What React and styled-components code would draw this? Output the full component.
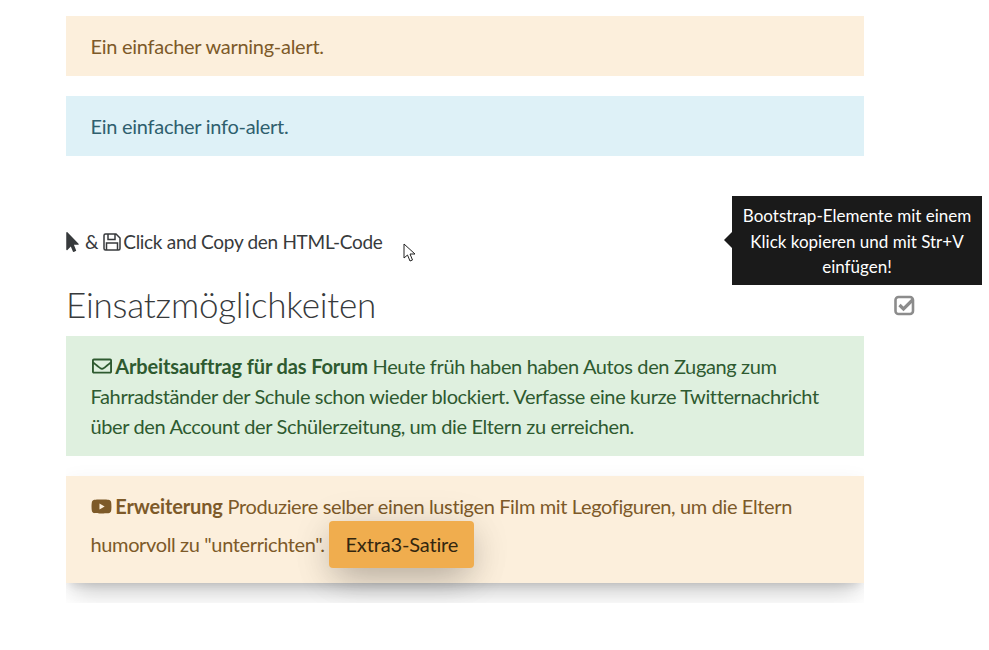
import React from "react";
import styled, { createGlobalStyle } from "styled-components";
import { FaMousePointer, FaRegEnvelope, FaYoutube } from "react-icons/fa";

const Global = createGlobalStyle`
  html, body {
    margin: 0;
    background: #fff;
    font-family: "Lato", "Open Sans", sans-serif;
    color: #373a3c;
  }
`;

const Page = styled.div`
  position: relative;
  width: 989px;
  height: 650px;
  overflow: hidden;
  padding: 16px 0 0 66px;
  box-sizing: border-box;
`;

const Column = styled.div`
  width: 798px;
`;

const colors = {
  warning: { bg: "#fcefdc", fg: "#7d5a29" },
  info: { bg: "#def1f7", fg: "#2f5f6e" },
  success: { bg: "#dff0df", fg: "#2e5a30" },
};

const Alert = styled.div`
  padding: 15px 24px 15px 24.5px;
  margin-bottom: 20px;
  font-size: 20px;
  line-height: 30px;
  letter-spacing: ${(p) => (p.$long ? "-0.37px" : "-0.27px")};
  white-space: nowrap;
  background: ${(p) => colors[p.$kind].bg};
  color: ${(p) => colors[p.$kind].fg};
  b {
    letter-spacing: -0.14px;
  }
`;

const MailIcon = styled(FaRegEnvelope)`
  vertical-align: -2px;
  margin: 0 -1px 0 1px;
`;

const VideoIcon = styled(FaYoutube)`
  vertical-align: -3px;
  margin-right: -1px;
`;

const ShadowClip = styled.div`
  overflow: hidden;
  padding-top: 20px;
  padding-bottom: 20px;
  margin-top: -20px;
`;

const RaisedAlert = styled(Alert)`
  position: relative;
  margin-bottom: 0;
  box-shadow: 0 16px 24px -8px rgba(0, 0, 0, 0.2), 0 4px 20px 0 rgba(0, 0, 0, 0.05),
    0 7px 8px -5px rgba(0, 0, 0, 0.1);
`;

const Button = styled.span`
  display: inline-block;
  padding: 8px 16px;
  background: #f0ad4e;
  color: #33260f;
  border-radius: 4px;
  line-height: 31px;
  letter-spacing: -0.15px;
  box-shadow: 0 14px 36px -6px rgba(0, 0, 0, 0.26), 0 4px 40px 0 rgba(0, 0, 0, 0.1);
`;

const CopyLine = styled.div`
  margin-top: 71px;
  font-size: 19px;
  line-height: 30px;
  letter-spacing: -0.3px;
  color: #373a3c;
  display: flex;
  align-items: center;
  svg {
    flex: none;
  }
`;

const PointerIcon = styled(FaMousePointer)`
  width: 13px;
  height: 20px;
`;

const Amp = styled.span`
  margin: 0 5px 0 6px;
`;

const SaveIcon = styled.svg`
  width: 18px;
  height: 18px;
  margin-right: 2px;
`;

const Heading = styled.h2`
  margin: 26px 0 11px;
  font-size: 35px;
  line-height: 42px;
  font-weight: 300;
  letter-spacing: -0.2px;
  color: #373a3c;
`;

const Tooltip = styled.div`
  position: absolute;
  left: 732px;
  top: 196px;
  width: 250px;
  padding: 7px 8px 5.5px;
  box-sizing: border-box;
  background: #1a1a1a;
  color: #fff;
  font-size: 17px;
  line-height: 25.5px;
  text-align: center;
  white-space: nowrap;
  &::before {
    content: "";
    position: absolute;
    left: -8px;
    top: 36px;
    border-style: solid;
    border-width: 8px 8px 8px 0;
    border-color: transparent #1a1a1a transparent transparent;
  }
`;

const CheckMark = styled.svg`
  position: absolute;
  left: 894px;
  top: 295px;
  width: 21px;
  height: 21px;
`;

const Cursor = styled.svg`
  position: absolute;
  left: 403px;
  top: 243px;
  width: 14px;
  height: 20px;
`;

export default function App() {
  return (
    <Page>
      <Global />
      <Column>
        <Alert $kind="warning">Ein einfacher warning-alert.</Alert>
        <Alert $kind="info">Ein einfacher info-alert.</Alert>
        <CopyLine>
          <PointerIcon />
          <Amp>&amp;</Amp>
          <SaveIcon viewBox="0 0 18 18">
            <path
              d="M1 2.5 A1.5 1.5 0 0 1 2.5 1 H13 L17 5 V15.5 A1.5 1.5 0 0 1 15.5 17 H2.5 A1.5 1.5 0 0 1 1 15.5 Z M5 1.5 V6.5 H12 V1.5 M3.5 16.5 V10 H14.5 V16.5"
              fill="none"
              stroke="#373a3c"
              strokeWidth="1.5"
            />
          </SaveIcon>
          <span>Click and Copy den HTML-Code</span>
        </CopyLine>
        <Heading>Einsatzmöglichkeiten</Heading>
        <Alert $kind="success" $long>
          <MailIcon size={20} /> <b>Arbeitsauftrag für das Forum</b> Heute früh haben haben Autos den Zugang zum
          <br />
          Fahrradständer der Schule schon wieder blockiert. Verfasse eine kurze Twitternachricht
          <br />
          über den Account der Schülerzeitung, um die Eltern zu erreichen.
        </Alert>
        <ShadowClip>
          <RaisedAlert $kind="warning" $long>
            <VideoIcon size={21} /> <b>Erweiterung</b> Produziere selber einen lustigen Film mit Legofiguren, um die Eltern
            <br />
            humorvoll zu "unterrichten". <Button>Extra3-Satire</Button>
          </RaisedAlert>
        </ShadowClip>
      </Column>
      <Tooltip>
        Bootstrap-Elemente mit einem
        <br />
        Klick kopieren und mit Str+V
        <br />
        einfügen!
      </Tooltip>
      <CheckMark viewBox="0 0 21 21">
        <rect x="1.5" y="2" width="17.5" height="17" rx="3" fill="none" stroke="#8c8c8c" strokeWidth="2.6" />
        <path d="M5.5 10 L9.5 14 L19 4.5" fill="none" stroke="#8c8c8c" strokeWidth="3.2" />
      </CheckMark>
      <Cursor viewBox="0 0 14 20">
        <path d="M1 1 L1 15 L4.5 12 L7 18 L9.5 17 L7 11 L12 11 Z" fill="#fff" stroke="#222" strokeWidth="1" />
      </Cursor>
    </Page>
  );
}
